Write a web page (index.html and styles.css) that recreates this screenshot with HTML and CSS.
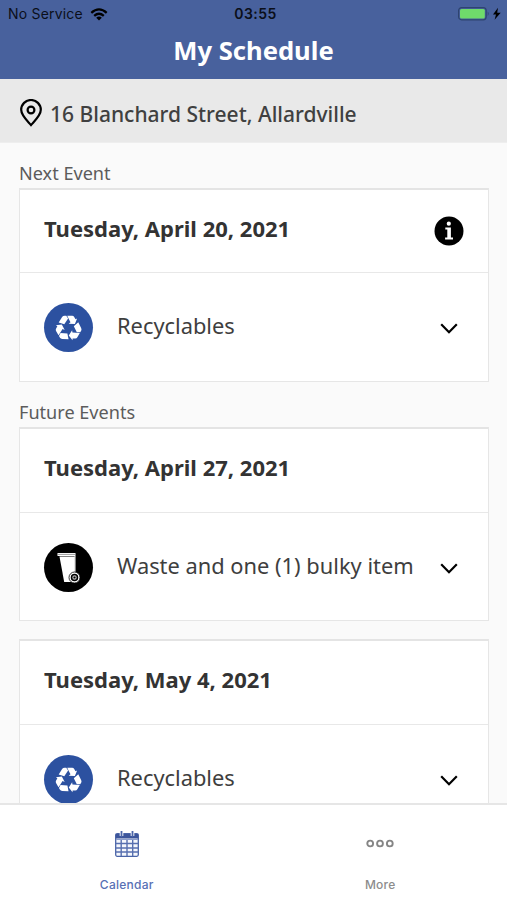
FILE: index.html
```html
<!DOCTYPE html>
<html lang="en">
<head>
<meta charset="utf-8">
<title>My Schedule</title>
<link rel="stylesheet" href="styles.css">
</head>
<body>
<svg class="defs" aria-hidden="true">
  <symbol id="recycle" viewBox="-24.5 -25 49 49">
    <g fill="#fff">
      <g id="arm">
        <path d="M-9.800-5.600-6.400-10.900Q-5.400-12.300-4-12.300H-2.200L-.4-9.400-4.200-3.700Z"/>
        <path d="M-1.300-12.300H3.600Q5-12.300 5.700-11L7-8.800 8.600-9.600 6.400-4 .2-4.300 2-5.700.4-8.800Z"/>
      </g>
      <use href="#arm" transform="rotate(120)"/>
      <use href="#arm" transform="rotate(240)"/>
    </g>
  </symbol>
  <symbol id="chevron" viewBox="0 0 18 11">
    <path d="M1.2 1.2 9 9.2 16.8 1.2" fill="none" stroke="#000" stroke-width="2.200"/>
  </symbol>
</svg>
<div class="app">
  <header class="header">
    <div class="status">
      <div class="carrier"><span>No Service</span>
        <svg width="18" height="13" viewBox="0 0 18 13"><g fill="none" stroke="#000" stroke-width="2.300"><path d="M1.3 4.800Q9-2 16.700 4.800"/><path d="M4.200 7.800Q9 3.600 13.800 7.800"/></g><path d="M6.200 9.700Q9 7.400 11.800 9.700L9 12.600Z"/></svg>
      </div>
      <span class="time">03:55</span>
      <svg class="battery" width="44" height="14" viewBox="0 0 44 14"><rect x=".6" y=".6" width="27.600" height="12.200" rx="3" fill="none" stroke="#2e4470" stroke-width="1.200"/><rect x="2" y="2" width="24.800" height="9.400" rx="1.500" fill="#6fdb6b"/><path d="M29.700 4.500q2 2.200 0 4.500Z" fill="#2e4470"/><path d="M40 .7 35 7.400h3L36.600 12.800 42.700 5.700H39.200Z"/></svg>
    </div>
    <h1>My Schedule</h1>
  </header>
  <div class="address">
    <svg width="22" height="28" viewBox="0 0 22 28"><path d="M11 26C7 21.500 1.200 16.500 1.200 10.800a9.800 9.800 0 0 1 19.600 0C20.800 16.500 15 21.500 11 26Z" fill="none" stroke="#000" stroke-width="2.200"/><circle cx="11" cy="11" r="3.400" fill="none" stroke="#000" stroke-width="2.200"/></svg>
    <span>16 Blanchard Street, Allardville</span>
  </div>
  <main class="schedule">
    <h2>Next Event</h2>
    <section class="card next">
      <div class="date"><h3>Tuesday, April 20, 2021</h3>
        <svg class="info" width="30" height="30" viewBox="0 0 30 30"><circle cx="15" cy="15" r="14.500"/><g fill="#fff"><circle cx="14.800" cy="7.700" r="2.100"/><path d="M11.300 11.600H16.900V21.600H19V23.500H11.100V21.600H13.300V13.500H11.300Z"/></g></svg>
      </div>
      <div class="item"><div class="badge"><svg><use href="#recycle"/></svg></div><span>Recyclables</span><svg class="chevron"><use href="#chevron"/></svg></div>
    </section>
    <h2 class="future">Future Events</h2>
    <section class="card">
      <div class="date"><h3>Tuesday, April 27, 2021</h3></div>
      <div class="item"><div class="badge waste"><svg viewBox="0 0 49 49"><path d="M13.500 10H31.500V13H13.500Z" fill="#fff"/><path d="M14 11.400H31" stroke="#555" stroke-width=".6"/><path d="M15.500 13.500H30.800V31L27.500 39H20.200Z" fill="#fff"/><path d="M31 13V30" stroke="#fff"/><circle cx="30.500" cy="34.500" r="5.500" fill="#fff" stroke="#000" stroke-width=".8"/><circle cx="30.500" cy="34.500" r="3" fill="#bbb" stroke="#000" stroke-width="1.500"/><circle cx="30.500" cy="34.500" r="1.100"/></svg></div><span>Waste and one (1) bulky item</span><svg class="chevron"><use href="#chevron"/></svg></div>
    </section>
    <section class="card">
      <div class="date"><h3>Tuesday, May 4, 2021</h3></div>
      <div class="item"><div class="badge"><svg><use href="#recycle"/></svg></div><span>Recyclables</span><svg class="chevron"><use href="#chevron"/></svg></div>
    </section>
  </main>
  <nav class="tabs">
    <a class="tab active">
      <svg width="24" height="28" viewBox="0 0 24 28"><rect x=".7" y="3.700" width="22.600" height="22.600" rx="1.500" fill="#f5f7fc" stroke="#4a64a8" stroke-width="1.300"/><path d="M.7 4H23.300V8.500H.7Z" fill="#3c559b"/><path d="M1 13.500H23M1 18H23M1 22H23M6.200 9V26M12 9V26M17.700 9V26" stroke="#5870b0" stroke-width="1.400"/><path d="M1 9.500H23" stroke="#8b9dcc"/><path d="M6.500 1V6M17.500 1V6" stroke="#fff" stroke-width="3.600"/><path d="M6.500 1V7M17.500 1V7" stroke="#4a64a8" stroke-width="1.800"/></svg>
      <span>Calendar</span>
    </a>
    <a class="tab">
      <svg width="28" height="28" viewBox="0 0 28 28"><g fill="none" stroke="#858585" stroke-width="1.900"><circle cx="4.200" cy="13.500" r="2.900"/><circle cx="14" cy="13.500" r="2.900"/><circle cx="23.800" cy="13.500" r="2.900"/></g></svg>
      <span>More</span>
    </a>
  </nav>
</div>
</body>
</html>
```
FILE: styles.css
```css
* { box-sizing: border-box; }
body { margin: 0; font-family: "Noto Sans", sans-serif; color: #333; }
h1, h2, h3 { margin: 0; }
svg { display: block; flex: none; }
.defs { position: absolute; width: 0; height: 0; }
.app { width: 507px; height: 900px; display: flex; flex-direction: column; overflow: hidden; background: #fafafa; }
.header { height: 79px; flex: none; background: #48619d; }
.status { height: 28px; display: grid; grid-template-columns: 1fr auto 1fr; align-items: center; padding: 0 5px 0 8px; font: 14px/28px Inter, sans-serif; color: #0b0f1a; }
.carrier { display: flex; align-items: center; gap: 7px; letter-spacing: .2px; }
.time { font-weight: 600; letter-spacing: .45px; padding-left: 1px; }
.battery { justify-self: end; }
h1 { color: #fff; text-align: center; font-size: 25.6px; line-height: 45px; font-weight: 700; }
.address { height: 64px; flex: none; display: flex; align-items: center; gap: 8px; padding: 3px 20px 0; background: #e9e9e9; border-bottom: 1px solid #eee; font-size: 21px; font-weight: 500; color: #404040; white-space: nowrap; }
.address svg { margin-top: 2px; }
.address span { padding-top: 3px; }
.schedule { flex: 1; min-height: 0; overflow: hidden; padding: 18px 18px 0 19px; }
h2 { height: 27px; font-size: 18.1px; line-height: 25px; font-weight: 400; color: #5c5c5c; }
.future { margin-top: 18px; height: 27px; }
.card { height: 194px; background: #fff; border: 1px solid #e6e6e6; border-top: 2px solid #e4e4e4; }
.card + .card { margin-top: 18px; }
.date { height: 83px; display: flex; align-items: center; justify-content: space-between; padding: 0 24px; }
.next .date { height: 82px; }
h3 { font-size: 22px; line-height: 30px; font-weight: 700; padding-bottom: 7px; }
.item { height: 109px; display: flex; align-items: center; border-top: 1px solid #e8e8e8; padding: 0 30px 0 24px; font-size: 21.85px; color: #3e3e3e; white-space: nowrap; }
.item span { flex: 1; margin-left: 24px; padding-bottom: 4px; }
.badge { width: 49px; height: 49px; flex: none; border-radius: 50%; background: #2c51a0; }
.badge svg { width: 49px; height: 49px; }
.waste { background: #000; }
.chevron { width: 18px; height: 11px; margin-top: 3px; }
.tabs { height: 97px; flex: none; display: flex; background: #fff; border-top: 2px solid #e6e6e6; }
.tab { flex: 1; display: flex; flex-direction: column; align-items: center; padding-top: 25px; font: 500 12px/16px Inter, sans-serif; letter-spacing: .25px; color: #8c8c8c; }
.tab span { margin-top: 19px; }
.active { color: #5870b5; }
```
